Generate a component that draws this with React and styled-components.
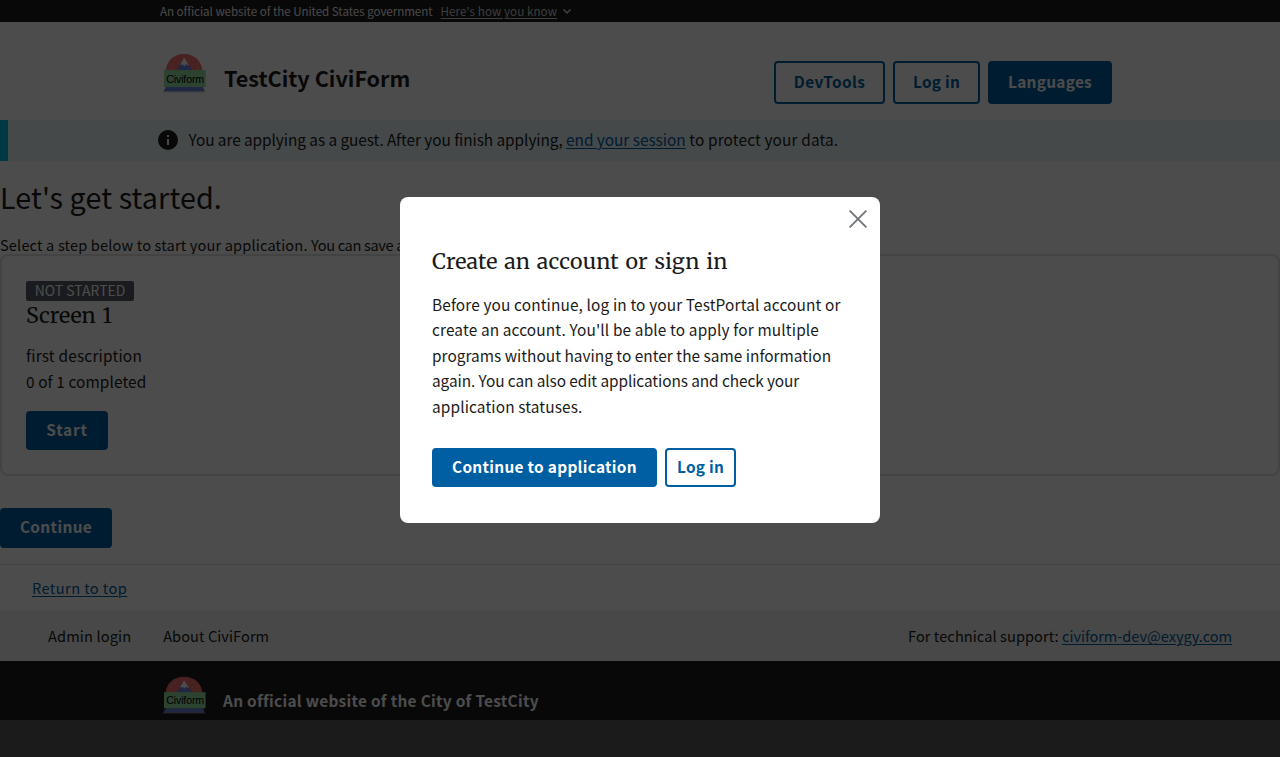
import React from 'react';
import styled, { createGlobalStyle } from 'styled-components';

const sans = '"Noto Sans CJK SC", "Noto Sans", sans-serif';
const serif = '"Merriweather", "Noto Serif", "DejaVu Serif", serif';
const blue = '#005ea2';
const ink = '#1b1b1b';

const GlobalStyle = createGlobalStyle`
  *, *::before, *::after { box-sizing: border-box; }
  html { background: #fff; }
  body { margin: 0; overflow: hidden; color: ${ink}; font-family: ${sans}; font-size: 15.4px; }
  h1, h2, p { margin: 0; font-weight: 400; }
`;

const Text = styled.span`
  white-space: pre;
  letter-spacing: ${(p) => p.$track || 0}px;
`;

const Link = styled.a`
  color: ${blue};
  white-space: pre;
  letter-spacing: ${(p) => p.$track || 0}px;
  text-decoration: underline;
  text-underline-offset: 2px;
  text-decoration-thickness: 1px;
`;

const Page = styled.div`
  width: 1280px;
  height: 757px;
  display: flex;
  flex-direction: column;
  background: #fff;
  overflow: hidden;
`;

const Banner = styled.div`
  flex: none;
  height: 22px;
  padding-left: 160px;
  display: flex;
  align-items: center;
  gap: 8px;
  background: ${ink};
  color: #f0f0f0;
  font-size: 11.6px;
  line-height: 22px;
`;

const BannerToggle = styled.div`
  display: flex;
  align-items: center;
  gap: 5px;
`;

const BannerLink = styled(Link)`
  color: #c9cdd0;
`;

const Header = styled.header`
  flex: none;
  height: 98px;
  padding: 31px 168px 0 163px;
  display: flex;
  align-items: flex-start;
`;

const SiteTitle = styled.div`
  margin: 8px 0 0 18px;
  font-size: 21.6px;
  font-weight: 700;
  line-height: 34px;
`;

const HeaderActions = styled.nav`
  margin: 8px 0 0 auto;
  display: flex;
  gap: 8px;
`;

const Button = styled.button`
  flex: none;
  width: ${(p) => p.$width}px;
  height: ${(p) => p.$height || 39}px;
  margin: 0;
  padding: 0 0 ${(p) => (p.$height === 40 ? 5 : 3)}px;
  display: flex;
  align-items: center;
  justify-content: center;
  border: 2px solid ${blue};
  border-radius: 4px;
  background: ${(p) => (p.$outline ? 'transparent' : blue)};
  color: ${(p) => (p.$outline ? blue : '#fff')};
  font-family: ${sans};
  font-size: 15.4px;
  font-weight: 700;
  line-height: 20px;
`;

const Alert = styled.div`
  flex: none;
  height: 41px;
  padding: 0 0 1px 150px;
  display: flex;
  align-items: center;
  border-left: 8px solid #00bde3;
  background: #e7f6f8;
  line-height: 25px;
`;

const AlertText = styled.p`
  margin: 0 0 1px 10.5px;
`;

const Title = styled.h1`
  flex: none;
  height: 44px;
  margin-top: 14px;
  font-size: 28.7px;
  line-height: 44px;
`;

const Intro = styled.p`
  flex: none;
  margin-top: 15px;
  height: 20px;
  font-size: 14.6px;
  line-height: 22px;
`;

const Card = styled.section`
  flex: none;
  height: 222px;
  padding: 25px 24px 0;
  display: flex;
  flex-direction: column;
  align-items: flex-start;
  border: 2px solid #dfe1e2;
  border-radius: 8px;
`;

const Badge = styled.span`
  width: 108px;
  height: 20px;
  display: flex;
  align-items: center;
  justify-content: center;
  border-radius: 2px;
  background: #565c65;
  color: #fff;
  font-size: 13.9px;
  line-height: 18px;
  padding-bottom: 2px;
`;

const SerifHeading = styled.h2`
  margin-top: 1px;
  font-family: ${serif};
  font-size: 21.4px;
  line-height: 28px;
  word-spacing: 1.3px;
`;

const CardText = styled.div`
  margin: 13px 0 16.8px;
  line-height: 25.6px;
`;

const Continue = styled.div`
  flex: none;
  height: 88px;
  padding-top: 32px;
`;

const ReturnRow = styled.div`
  flex: none;
  height: 47px;
  padding-left: 32px;
  border-top: 1px solid #dfe1e2;
  font-size: 14.6px;
  line-height: 46px;
`;

const FooterNav = styled.div`
  flex: none;
  height: 50px;
  padding: 0 48px;
  display: flex;
  gap: 32px;
  background: #f0f0f0;
  font-size: 14.6px;
  line-height: 50px;
`;

const Support = styled.div`
  margin-left: auto;
`;

const Identifier = styled.footer`
  flex: 1;
  padding: 15px 0 0 163px;
  display: flex;
  align-items: flex-start;
  gap: 17px;
  background: ${ink};
  color: #fff;
  font-weight: 700;
`;

const IdentifierText = styled.div`
  margin-top: 12px;
  line-height: 24px;
`;

const Overlay = styled.div`
  position: absolute;
  top: 0;
  left: 0;
  width: 1280px;
  height: 720px;
  display: flex;
  align-items: center;
  justify-content: center;
  background: rgba(0, 0, 0, 0.7);
`;

const Modal = styled.div`
  width: 480px;
  height: 326px;
  padding: 13px 13px 0 32px;
  border-radius: 8px;
  background: #fff;
`;

const CloseRow = styled.div`
  height: 18px;
  display: flex;
  justify-content: flex-end;
`;

const ModalHeading = styled(SerifHeading)`
  margin-top: 20px;
`;

const ModalText = styled.p`
  margin-top: 15.6px;
  line-height: 25.5px;
`;

const Line = styled.span`
  display: block;
  white-space: pre;
  letter-spacing: ${(p) => p.$track}px;
`;

const ModalActions = styled.div`
  margin-top: 28.9px;
  display: flex;
  gap: 8px;
`;

const Svg = styled.svg`
  flex: none;
  display: block;
`;

const Logo = ({ height = 40 }) => (
  <Svg width="43" height={height} viewBox="0 0 43 40" preserveAspectRatio="none">
    <path d="M2.7 17.5V17.3C3.6 7.6 11 .9 21 .9s17.400 6.700 18.300 16.400v.2z" fill="#f87171" />
    <g fill="#ffb3b3">
      <circle cx="8" cy="12" r=".6" /><circle cx="12" cy="7" r=".6" /><circle cx="30" cy="6" r=".6" />
      <circle cx="34" cy="11" r=".6" /><circle cx="8" cy="15.5" r=".5" /><circle cx="15" cy="10.5" r=".5" />
      <circle cx="29.5" cy="12" r=".5" /><circle cx="35" cy="15" r=".6" />
    </g>
    <path d="M13.5 17.5 21 4.500l8.300 13z" fill="#6a82dc" />
    <path d="m17.200 11.500 3.900-7 4.500 7-.8 1.200-1.800-1.700-1.500 2.500-2-2.200-1.300.7z" fill="#fff" />
    <path d="M3 34h37l1.800 4.500H.3z" fill="#6a82dc" />
    <path d="M.3 38.500h41.500v.8H.3z" fill="#b5bac8" />
    <rect x="1" y="17" width="41.600" height="17" fill="#94dfa8" />
    <text x="3.200" y="29.800" textLength="38" fontSize="10.600" fontWeight="400" fontFamily="Liberation Sans, sans-serif" fill="#000">Civiform</text>
  </Svg>
);

const Chevron = () => (
  <Svg width="10" height="10" viewBox="0 0 10 10" fill="none" stroke="#dfe1e2" strokeWidth="1.500">
    <path d="m1.500 3.500 3.500 3.500 3.500-3.500" />
  </Svg>
);

const InfoIcon = () => (
  <Svg width="20" height="20" viewBox="0 0 20 20">
    <circle cx="10" cy="10" r="10" fill={ink} />
    <path d="M9 5h2v2H9zM9 9h2v6H9z" fill="#e7f6f8" />
  </Svg>
);

const CloseIcon = () => (
  <Svg width="18" height="18" viewBox="0 0 18 18" fill="none" stroke="#71767a" strokeWidth="1.9">
    <path d="m.6.6 16.800 16.800M17.400.6.6 17.400" />
  </Svg>
);

export default function App() {
  return (
    <>
      <GlobalStyle />
      <Page>
        <Banner>
          <Text $track={-0.05}>An official website of the United States government</Text>
          <BannerToggle>
            <BannerLink $track={0.08}>Here's how you know</BannerLink>
            <Chevron />
          </BannerToggle>
        </Banner>
        <Header>
          <Logo />
          <SiteTitle><Text>TestCity CiviForm</Text></SiteTitle>
          <HeaderActions>
            <Button $outline $width={111} $height={43}><Text $track={0.35}>DevTools</Text></Button>
            <Button $outline $width={87} $height={43}><Text $track={0.25}>Log in</Text></Button>
            <Button $width={124} $height={43}><Text $track={0.3}>Languages</Text></Button>
          </HeaderActions>
        </Header>
        <Alert>
          <InfoIcon />
          <AlertText>
            <Text $track={-0.065}>You are applying as a guest. After you finish applying, </Text>
            <Link $track={-0.03}>end your session</Link>
            <Text $track={0.14}> to protect your data.</Text>
          </AlertText>
        </Alert>
        <Title><Text $track={0.13}>Let's get started.</Text></Title>
        <Intro>
          <Text $track={0.15}>Select a step below to start your application. </Text>
          <Text $track={-0.35}>You can save at any time.</Text>
        </Intro>
        <Card>
          <Badge><Text $track={0.05}>NOT STARTED</Text></Badge>
          <SerifHeading><Text>Screen 1</Text></SerifHeading>
          <CardText>
            <Line $track={0.2}>first description</Line>
            <Line $track={0.1}>0 of 1 completed</Line>
          </CardText>
          <Button $width={82}><Text $track={0.75}>Start</Text></Button>
        </Card>
        <Continue>
          <Button $width={112} $height={40}><Text $track={0.35}>Continue</Text></Button>
        </Continue>
        <ReturnRow><Link $track={0.42}>Return to top</Link></ReturnRow>
        <FooterNav>
          <Text $track={0.13}>Admin login</Text>
          <Text $track={0.06}>About CiviForm</Text>
          <Support>
            <Text $track={0.07}>For technical support: </Text>
            <Link $track={-0.05}>civiform-dev@exygy.com</Link>
          </Support>
        </FooterNav>
        <Identifier>
          <Logo height={38} />
          <IdentifierText><Text $track={0.3}>An official website of the City of TestCity</Text></IdentifierText>
        </Identifier>
      </Page>
      <Overlay>
        <Modal>
          <CloseRow><CloseIcon /></CloseRow>
          <ModalHeading><Text $track={0.2}>Create an account or sign in</Text></ModalHeading>
          <ModalText>
            <Line $track={0.13}>Before you continue, log in to your TestPortal account or</Line>
            <Line $track={0.14}>create an account. You'll be able to apply for multiple</Line>
            <Line $track={0.02}>programs without having to enter the same information</Line>
            <Line $track={-0.08}>again. You can also edit applications and check your</Line>
            <Line $track={0.13}>application statuses.</Line>
          </ModalText>
          <ModalActions>
            <Button $width={225}><Text $track={0.3}>Continue to application</Text></Button>
            <Button $outline $width={71}><Text $track={0.25}>Log in</Text></Button>
          </ModalActions>
        </Modal>
      </Overlay>
    </>
  );
}
